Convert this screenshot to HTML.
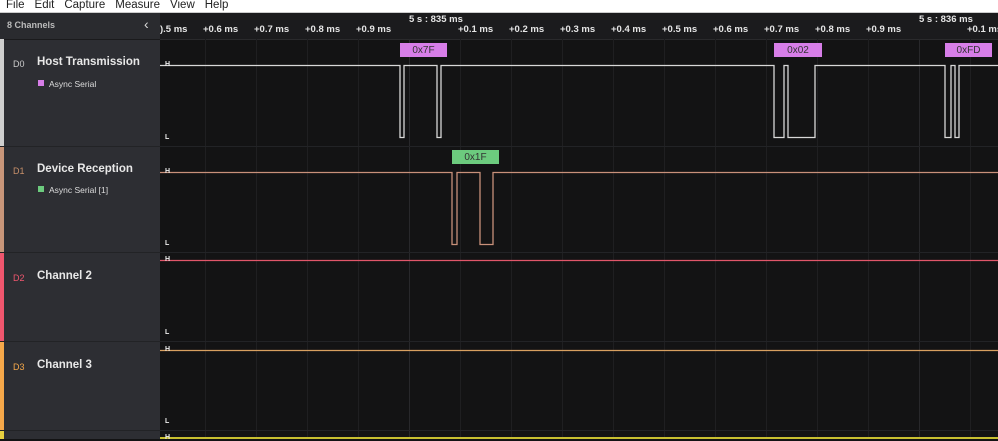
<!DOCTYPE html><html><head><style>
body{margin:0;width:998px;height:439px;overflow:hidden;background:#131314;font-family:"Liberation Sans",sans-serif;position:relative}
.abs{position:absolute;white-space:nowrap}
.menu{left:0;top:0;width:998px;height:12px;background:#fff;border-bottom:1px solid #ccc;font-size:11.5px;color:#222;line-height:10px}
.menu span{margin-left:6px;margin-right:4px}
.lp{left:0;top:13px;width:160px;height:426px;background:#2d2e33}
.hdr{left:0;top:13px;width:160px;height:26px;background:#2a2b2f;border-bottom:1px solid #1a1a1c}
.thdr{left:160px;top:13px;width:838px;height:26px;background:#1b1b1d;border-bottom:1px solid #2a2a2c}
.tick{color:#e6e6e6;font-size:9.5px;font-weight:bold;top:24px}
.strip{left:0;width:4px}
.name{color:#e8e8e8;font-size:11.5px;font-weight:bold;left:37px}
.dn{font-size:9px;left:13px}
.sub{color:#ddd;font-size:8.5px;left:49px}
.sq{width:6px;height:6px;left:38px}
.sep{left:0;width:998px;height:1px;background:#222326}
.hl{color:#eee;font-size:7px;font-weight:bold;left:165px}
.lbl{height:14px;font-size:10px;text-align:center;line-height:16px;color:#333}
</style></head><body>
<div class="abs menu"><span>File</span><span>Edit</span><span>Capture</span><span>Measure</span><span>View</span><span>Help</span></div>
<div class="abs lp"></div>
<div class="abs hdr"><div class="abs" style="left:7px;top:7px;color:#bbb;font-size:9px;font-weight:bold">8 Channels</div><div class="abs" style="left:144px;top:3px;color:#ddd;font-size:14px">‹</div></div>
<div class="abs thdr"></div>
<svg class="abs" style="left:160px;top:39px" width="838" height="400">
<g stroke="#1f1f21" stroke-width="1">
<line x1="45.5" y1="0" x2="45.5" y2="400"/><line x1="96.5" y1="0" x2="96.5" y2="400"/><line x1="147.5" y1="0" x2="147.5" y2="400"/><line x1="198.5" y1="0" x2="198.5" y2="400"/><line x1="249.5" y1="0" x2="249.5" y2="400" stroke="#28282b"/><line x1="300.5" y1="0" x2="300.5" y2="400"/><line x1="351.5" y1="0" x2="351.5" y2="400"/><line x1="402.5" y1="0" x2="402.5" y2="400"/><line x1="453.5" y1="0" x2="453.5" y2="400"/><line x1="504.5" y1="0" x2="504.5" y2="400"/><line x1="555.5" y1="0" x2="555.5" y2="400"/><line x1="606.5" y1="0" x2="606.5" y2="400"/><line x1="657.5" y1="0" x2="657.5" y2="400"/><line x1="708.5" y1="0" x2="708.5" y2="400"/><line x1="759.5" y1="0" x2="759.5" y2="400" stroke="#28282b"/><line x1="810.5" y1="0" x2="810.5" y2="400"/>
</g>
<g fill="none" stroke-width="1.3">
<polyline stroke="#d8d8d8" points="0,26.5 240,26.5 240,98.5 244,98.5 244,26.5 277,26.5 277,98.5 281,98.5 281,26.5 614,26.5 614,98.5 624,98.5 624,26.5 628,26.5 628,98.5 655,98.5 655,26.5 785,26.5 785,98.5 791,98.5 791,26.5 795,26.5 795,98.5 799,98.5 799,26.5 838,26.5"/>
<polyline stroke="#c8907a" points="0,133.5 292,133.5 292,205.5 297,205.5 297,133.5 320,133.5 320,205.5 333,205.5 333,133.5 838,133.5"/>
<line stroke="#e0566a" x1="0" y1="221.5" x2="838" y2="221.5"/>
<line stroke="#d8a060" x1="0" y1="311.5" x2="838" y2="311.5"/>
<line stroke="#c8c030" stroke-width="2" x1="0" y1="399" x2="838" y2="399"/>
</g>
</svg>
<div class="abs sep" style="top:146px"></div><div class="abs sep" style="top:252px"></div><div class="abs sep" style="top:341px"></div><div class="abs sep" style="top:430px"></div>
<div class="abs strip" style="top:39px;height:107px;background:#cfcfcf"></div>
<div class="abs strip" style="top:147px;height:105px;background:#c8967a"></div>
<div class="abs strip" style="top:253px;height:88px;background:#f0566e"></div>
<div class="abs strip" style="top:342px;height:88px;background:#f5a84a"></div>
<div class="abs strip" style="top:431px;height:8px;background:#e8d040"></div>
<div class="abs tick" style="left:160px">).5 ms</div>
<div class="abs tick" style="left:203px">+0.6 ms</div><div class="abs tick" style="left:254px">+0.7 ms</div><div class="abs tick" style="left:305px">+0.8 ms</div><div class="abs tick" style="left:356px">+0.9 ms</div>
<div class="abs tick" style="top:14px;left:409px">5 s : 835 ms</div>
<div class="abs tick" style="left:458px">+0.1 ms</div><div class="abs tick" style="left:509px">+0.2 ms</div><div class="abs tick" style="left:560px">+0.3 ms</div><div class="abs tick" style="left:611px">+0.4 ms</div><div class="abs tick" style="left:662px">+0.5 ms</div><div class="abs tick" style="left:713px">+0.6 ms</div><div class="abs tick" style="left:764px">+0.7 ms</div><div class="abs tick" style="left:815px">+0.8 ms</div><div class="abs tick" style="left:866px">+0.9 ms</div>
<div class="abs tick" style="top:14px;left:919px">5 s : 836 ms</div><div class="abs tick" style="left:967px">+0.1 ms</div>
<div class="abs lbl" style="left:400px;top:43px;width:47px;background:#d77ee8">0x7F</div>
<div class="abs lbl" style="left:774px;top:43px;width:48px;background:#d77ee8">0x02</div>
<div class="abs lbl" style="left:945px;top:43px;width:47px;background:#d77ee8">0xFD</div>
<div class="abs lbl" style="left:452px;top:150px;width:47px;background:#6ccb7e">0x1F</div>
<div class="abs hl" style="top:61px">H</div><div class="abs hl" style="top:134px">L</div>
<div class="abs hl" style="top:168px">H</div><div class="abs hl" style="top:240px">L</div>
<div class="abs hl" style="top:256px">H</div><div class="abs hl" style="top:329px">L</div>
<div class="abs hl" style="top:346px">H</div><div class="abs hl" style="top:418px">L</div>
<div class="abs hl" style="top:434px">H</div>
<div class="abs dn" style="top:59px;color:#ccc">D0</div><div class="abs name" style="top:56px">Host Transmission</div>
<div class="abs sq" style="top:80px;background:#d77ee8"></div><div class="abs sub" style="top:79px">Async Serial</div>
<div class="abs dn" style="top:166px;color:#c8906a">D1</div><div class="abs name" style="top:163px">Device Reception</div>
<div class="abs sq" style="top:186px;background:#6ccb7e"></div><div class="abs sub" style="top:185px">Async Serial [1]</div>
<div class="abs dn" style="top:273px;color:#f0566e">D2</div><div class="abs name" style="top:270px">Channel 2</div>
<div class="abs dn" style="top:362px;color:#f5a84a">D3</div><div class="abs name" style="top:359px">Channel 3</div>
</body></html>
